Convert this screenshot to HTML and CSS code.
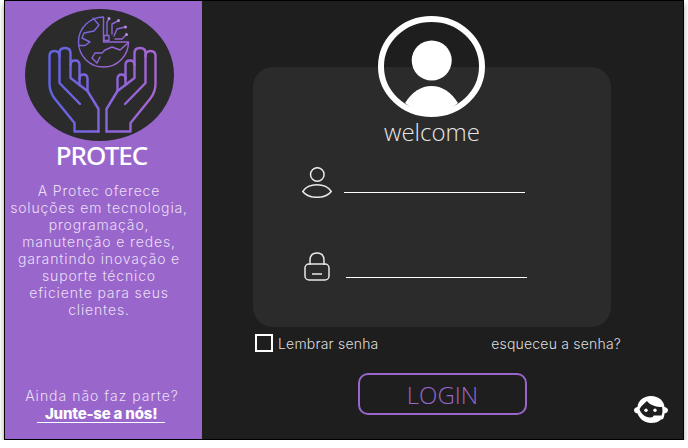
FILE: index.html
```html
<!DOCTYPE html>
<html lang="pt-BR">
<head>
  <meta charset="UTF-8">
  <title>Protec - Login</title>
  <meta name="viewport" content="width=device-width, initial-scale=1.0">
  <link rel="stylesheet" href="styles.css">
</head>
<body>
  <div class="frame">
    <aside class="sidebar">
      <svg class="logo" viewBox="25 9 149 132" width="149" height="132">
        <defs>
          <linearGradient id="grad" gradientUnits="userSpaceOnUse" x1="49" y1="0" x2="156" y2="0">
            <stop offset="0" stop-color="#5f64e6"/>
            <stop offset="1" stop-color="#a965d2"/>
          </linearGradient>
          <linearGradient id="globeGrad" gradientUnits="userSpaceOnUse" x1="78" y1="17" x2="128" y2="67">
            <stop offset="0" stop-color="#6f64de"/>
            <stop offset="1" stop-color="#a765d2"/>
          </linearGradient>
        </defs>
        <ellipse cx="99.500" cy="75" rx="74.500" ry="66" fill="#2b2b2b"/>
        <g fill="none" stroke="url(#grad)" stroke-width="2.400" stroke-linejoin="round" stroke-linecap="round">
          <path d="M98.500 131.500H74.500V123L55 99Q49.500 92 49.500 84V56Q49.500 51 54.500 51Q59.500 51 59.500 56V83L80 104"/>
          <path d="M59.500 56V53Q59.500 48 65 48Q70.500 48 70.500 53V78L87.500 91L98.500 109V131.500"/>
          <path d="M70.500 65Q70.500 60.500 75 60.500Q79.500 60.500 79.500 65V85"/>
          <path d="M79.500 79Q79.500 74.500 83.500 74.500Q87.500 74.500 87.500 79V91"/>
          <path d="M106.500 131.500H130.500V123L150 99Q155.500 92 155.500 84V56Q155.500 51 150.500 51Q145.500 51 145.500 56V83L125 104"/>
          <path d="M145.500 56V53Q145.500 48 140 48Q134.500 48 134.500 53V78L117.500 91L106.500 109V131.500"/>
          <path d="M134.500 65Q134.500 60.500 130 60.500Q125.500 60.500 125.500 65V85"/>
          <path d="M125.500 79Q125.500 74.500 121.500 74.500Q117.500 74.500 117.500 79V91"/>
        </g>
        <g fill="none" stroke="url(#globeGrad)" stroke-width="1.400" stroke-linejoin="round" stroke-linecap="round">
          <path d="M103.500 17A25 25 0 1 0 128.500 42H103.500Z"/>
          <path d="M93 18L99 25L94 31L84 33L82 38L90 42L85 45.500H79"/>
          <path d="M128 43L120 50L112 47L105 50L102 53H95L92 58L97 63L100 57"/>
          <path d="M104 35.500H109V40.500H104Z"/>
          <path d="M107 35V22L109 19M112 34V24L118 21M114 36L117 29L125 27M115 39H122L126.500 34.500"/>
        </g>
        <g fill="#b98ae0">
          <circle cx="109" cy="18.500" r="1.500"/>
          <circle cx="118.500" cy="20.500" r="1.500"/>
          <circle cx="125.500" cy="27" r="1.500"/>
          <circle cx="126.500" cy="34.500" r="1.500"/>
        </g>
      </svg>
      <div class="brand">PROTEC</div>
      <p class="about">A Protec oferece<br>soluções em tecnologia,<br>programação,<br>manutenção e redes,<br>garantindo inovação e<br>suporte técnico<br>eficiente para seus<br>clientes.</p>
      <div class="join">
        <div class="join-text">Ainda não faz parte?</div>
        <a class="join-link" href="#">Junte-se a nós!</a>
      </div>
    </aside>

    <main class="content">
      <section class="card">
        <svg class="avatar" viewBox="0 0 107 102" width="107" height="102">
          <ellipse cx="53.500" cy="50.500" rx="50.500" ry="47.500" fill="none" stroke="#fff" stroke-width="6"/>
          <circle cx="53.700" cy="44.500" r="20" fill="#fff"/>
          <path d="M27 87Q38 70 53.500 70Q69 70 80 87Q68 98 53.500 98Q39 98 27 87Z" fill="#fff"/>
        </svg>
        <h2 class="welcome">welcome</h2>
        <div class="field field-user">
          <svg class="field-icon" viewBox="0 0 30 31" width="30" height="31">
            <circle cx="15.300" cy="7.500" r="6.800" fill="none" stroke="#e8e8e8" stroke-width="1.500"/>
            <path d="M.8 24.500C4 19.500 10 17.800 15 17.800C20 17.800 26 19.500 29.200 24.500C26 29 21 30.300 15 30.300C9 30.300 4 29 .8 24.500Z" fill="none" stroke="#e8e8e8" stroke-width="1.500"/>
          </svg>
          <span class="field-line"></span>
        </div>
        <div class="field field-pass">
          <svg class="field-icon" viewBox="0 0 26 29" width="26" height="29">
            <path d="M6 13V8.500Q6 1 13 1Q20 1 20 8.500V13" fill="none" stroke="#e8e8e8" stroke-width="1.500"/>
            <rect x="1" y="12" width="24" height="16" rx="4" fill="none" stroke="#e8e8e8" stroke-width="1.500"/>
            <path d="M8 22H18" stroke="#e8e8e8" stroke-width="1.500"/>
          </svg>
          <span class="field-line"></span>
        </div>
      </section>

      <div class="options">
        <label class="remember"><span class="checkbox"></span>Lembrar senha</label>
        <a class="forgot" href="#">esqueceu a senha?</a>
      </div>

      <button class="login">LOGIN</button>

      <svg class="support" viewBox="0 0 34 27" width="34" height="27">
        <path d="M17 0C9 0 4 5 3.500 11C1 11.500 0 13 0 14C0 15.500 1 17 3.500 17.500C6 23.500 11 27 17 27C21 27 25 26 27 23.500C29 23.500 30 22.500 30.500 17.500C33 17 34 15.500 34 14C34 13 33 11.500 30.500 11C30 5 25 0 17 0Z" fill="#fff"/>
        <path d="M5.500 13C8 9 11 7 13 5C16 9 22 11 28 11C29 15 28.500 18 27 20.500H20C14 23.500 7 19 5.500 13Z" fill="#1e1e1e"/>
        <circle cx="12" cy="14.300" r="1.700" fill="#fff"/>
        <circle cx="21" cy="14.300" r="1.700" fill="#fff"/>
        <rect x="19" y="19.500" width="9" height="2.500" rx="1.200" fill="#fff"/>
      </svg>
    </main>
  </div>
</body>
</html>
```
FILE: styles.css
```css
body {
  margin: 0;
  padding-left: 4px;
  background: #fff;
  font-family: "Inter", "Open Sans", sans-serif;
  font-weight: 300;
}

.frame {
  display: flex;
  box-sizing: border-box;
  width: 680px;
  height: 440px;
  border: 1px solid #000;
  box-shadow: 0 4px 6px rgba(0, 0, 0, 0.35);
}

.sidebar {
  display: flex;
  flex-direction: column;
  align-items: center;
  width: 197px;
  background: #9966cc;
  color: #eadff5;
  text-align: center;
}

.logo {
  display: block;
  flex: none;
  margin: 8px 8px 0 0;
}

.brand {
  margin: 0 4px 0 0;
  color: #fff;
  font-family: "Noto Sans", sans-serif;
  font-size: 26px;
  font-weight: 500;
  line-height: 28px;
  letter-spacing: -1px;
}

.about {
  margin: 13px 9px 0 0;
  font-size: 14px;
  line-height: 17px;
  letter-spacing: 0.85px;
}

.join {
  margin-top: auto;
  margin-bottom: 16px;
  font-size: 14px;
  line-height: 17px;
  letter-spacing: 1px;
}

.join-text {
  margin: 0 3px 1px 0;
}

.join-link {
  display: block;
  width: 128px;
  margin-left: 12px;
  border-bottom: 1px solid #fff;
  color: #fff;
  font-size: 15px;
  font-weight: 800;
  letter-spacing: -0.2px;
  text-decoration: none;
}

.content {
  position: relative;
  flex: 1;
  padding: 66px 0 0 51px;
  background: #1e1e1e;
  color: #ddd;
}

.card {
  position: relative;
  box-sizing: border-box;
  width: 358px;
  height: 260px;
  padding-top: 50px;
  border-radius: 20px;
  background: #2b2b2b;
}

.avatar {
  position: absolute;
  top: -51px;
  left: 125px;
}

.welcome {
  margin: 0;
  color: #e6e6e6;
  font-family: "Open Sans", sans-serif;
  font-size: 24px;
  font-weight: 300;
  line-height: 30px;
  text-align: center;
}

.field {
  display: flex;
  align-items: flex-end;
}

.field-user {
  gap: 12px;
  margin: 20px 0 0 49px;
}

.field-pass {
  gap: 16px;
  margin: 54px 0 0 51px;
}

.field-icon {
  display: block;
  flex: none;
}

.field-line {
  width: 181px;
  margin-bottom: 5px;
  border-top: 1px solid #fff;
}

.field-pass .field-line {
  margin-bottom: 3px;
}

.options {
  display: flex;
  justify-content: space-between;
  align-items: center;
  width: 366px;
  margin: 7px 0 0 2px;
  font-size: 14px;
  letter-spacing: 0.2px;
}

.remember {
  display: flex;
  align-items: center;
  gap: 5px;
}

.checkbox {
  box-sizing: border-box;
  width: 18px;
  height: 18px;
  border: 2px solid #fff;
}

.forgot {
  color: inherit;
  text-decoration: none;
}

.login {
  display: block;
  box-sizing: border-box;
  width: 169px;
  height: 42px;
  margin: 21px 0 0 105px;
  padding: 0;
  border: 2px solid #9966cc;
  border-radius: 10px;
  background: transparent;
  color: #9966cc;
  font-family: "Open Sans", sans-serif;
  font-size: 24px;
  font-weight: 300;
  cursor: pointer;
}

.support {
  position: absolute;
  right: 15px;
  bottom: 16px;
}
```
